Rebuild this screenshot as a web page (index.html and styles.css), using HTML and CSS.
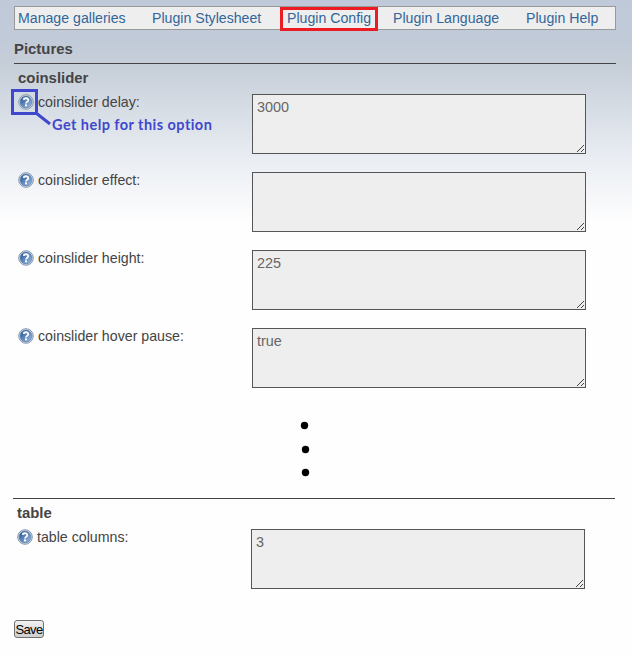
FILE: index.html
```
<!DOCTYPE html>
<html lang="en">
<head>
<meta charset="utf-8">
<title>Plugin Config</title>
<link rel="stylesheet" href="styles.css">
</head>
<body>
<svg class="defs" width="0" height="0" aria-hidden="true">
  <defs>
    <linearGradient id="disc" x1="0" y1="0" x2="1" y2="1">
      <stop offset="0.15" stop-color="#315f9f"/>
      <stop offset="1" stop-color="#a2c2e8"/>
    </linearGradient>
    <symbol id="help" viewBox="0 0 16 16">
      <circle cx="8" cy="8" r="7.3" fill="#d5dbe2" stroke="#8599b4" stroke-width="1"/>
      <circle cx="8" cy="8" r="5.9" fill="url(#disc)" stroke="#53779f" stroke-width=".6"/>
      <path d="M5.7 5.9C5.9 3.6 10.4 3.7 10.3 6.1C10.2 7.7 8.2 7.6 8 9.5" fill="none" stroke="#fff" stroke-width="1.8"/>
      <rect x="7" y="10.4" width="2" height="1.9" fill="#fff"/>
    </symbol>
    <symbol id="grip" viewBox="0 0 8 8">
      <path d="M0 7h1v1h-1zM1 6h1v1h-1zM2 5h1v1h-1zM3 4h1v1h-1zM4 3h1v1h-1zM5 2h1v1h-1zM6 1h1v1h-1zM4 7h1v1h-1zM5 6h1v1h-1zM6 5h1v1h-1z" fill="#444"/>
    </symbol>
  </defs>
</svg>
<main class="page">
  <nav class="tabs">
    <a class="galleries">Manage galleries</a>
    <a class="stylesheet">Plugin Stylesheet</a>
    <a class="config">Plugin Config</a>
    <a class="language">Plugin Language</a>
    <a>Plugin Help</a>
  </nav>
  <h1>Pictures</h1>
  <section class="group">
    <h2>coinslider</h2>
    <div class="row">
      <div class="label"><svg class="icon"><use href="#help"/></svg><span class="name">coinslider delay:</span>
        <div class="callout">
          <svg class="pointer" width="42" height="36"><path d="M1.5 1.5h24v23h-24zM25 24l14 11" fill="none" stroke="#3f48cc" stroke-width="3"/></svg>
          <span class="note">Get help for this option</span>
        </div>
      </div>
      <div class="field">3000<svg class="grip"><use href="#grip"/></svg></div>
    </div>
    <div class="row">
      <div class="label"><svg class="icon"><use href="#help"/></svg><span class="name">coinslider effect:</span></div>
      <div class="field"><svg class="grip"><use href="#grip"/></svg></div>
    </div>
    <div class="row">
      <div class="label"><svg class="icon"><use href="#help"/></svg><span class="name">coinslider height:</span></div>
      <div class="field">225<svg class="grip"><use href="#grip"/></svg></div>
    </div>
    <div class="row">
      <div class="label"><svg class="icon"><use href="#help"/></svg><span class="name">coinslider hover pause:</span></div>
      <div class="field">true<svg class="grip"><use href="#grip"/></svg></div>
    </div>
  </section>
  <svg class="dots" width="10" height="60"><circle cx="4.5" cy="6.5" r="3.7"/><circle cx="5.5" cy="30.5" r="3.7"/><circle cx="5.5" cy="53.5" r="3.7"/></svg>
  <section class="group table">
    <h2>table</h2>
    <div class="row">
      <div class="label"><svg class="icon"><use href="#help"/></svg><span class="name">table columns:</span></div>
      <div class="field">3<svg class="grip"><use href="#grip"/></svg></div>
    </div>
  </section>
  <button class="save">Save</button>
</main>
</body>
</html>
```
FILE: styles.css
```
* { box-sizing: border-box; }
body {
  margin: 0;
  height: 655px;
  overflow: hidden;
  font: 14.2px/18px "Liberation Sans", Arial, sans-serif;
  color: #444;
  background: #fefefe linear-gradient(#c0c9d9 0, #c0cad8 35px, #c6ced8 65px, #e8ecf2 155px, #fefefe 223px) no-repeat;
}
.defs { position: absolute; }
.page { width: 602px; margin-left: 14px; padding-top: 6px; }
.tabs {
  display: flex;
  height: 24px;
  padding-left: 3px;
  border: 1px solid #999;
  background: #eee;
  color: #369;
  font-size: 14.15px;
  line-height: 23px;
  white-space: nowrap;
}
.tabs .galleries { width: 134px; }
.tabs .stylesheet { width: 128px; }
.tabs .config {
  width: 98px;
  height: 24px;
  padding-left: 4px;
  border: 3px solid #ed1c24;
  line-height: 17px;
}
.tabs .language { width: 133px; margin-left: 15px; }
h1, h2 { margin: 0; font-size: 14.9px; line-height: 18px; }
h1 { height: 34px; padding-top: 10px; border-bottom: 1px solid #444; }
.group { padding: 5px 0 0 4px; }
h2 { height: 25px; }
.row { display: flex; height: 60px; margin-bottom: 18px; }
.label { position: relative; display: flex; width: 234px; }
.icon { width: 16px; height: 16px; margin-right: 4px; }
.name { line-height: 16px; }
.callout { position: absolute; left: -7px; top: -5px; color: #3f48cc; }
.pointer { display: block; }
.note {
  position: absolute;
  left: 41px;
  top: 27px;
  font: bold 14.5px/18px Lato, "Open Sans", sans-serif;
  letter-spacing: .45px;
  white-space: nowrap;
}
.field {
  position: relative;
  width: 334px;
  height: 60px;
  padding: 3px 4px;
  border: 1px solid #555;
  background: #eee;
  color: #666;
  font-size: 14.4px;
}
.grip { position: absolute; right: 0; bottom: 1px; width: 8px; height: 8px; }
.dots { display: block; margin: 31px 0 0 286px; fill: #000; }
.table { width: 602px; margin: 19px 0 0 -1px; border-top: 1px solid #444; }
.save {
  display: block;
  width: 30px;
  height: 18px;
  margin-top: 31px;
  padding: 0;
  border: 1px solid #707070;
  border-radius: 3px;
  background: linear-gradient(#f3f3f3, #ddd 50%, #cfcfcf);
  color: #000;
  font: 13px/17px "Liberation Sans", Arial, sans-serif;
  letter-spacing: -.6px;
}
```
